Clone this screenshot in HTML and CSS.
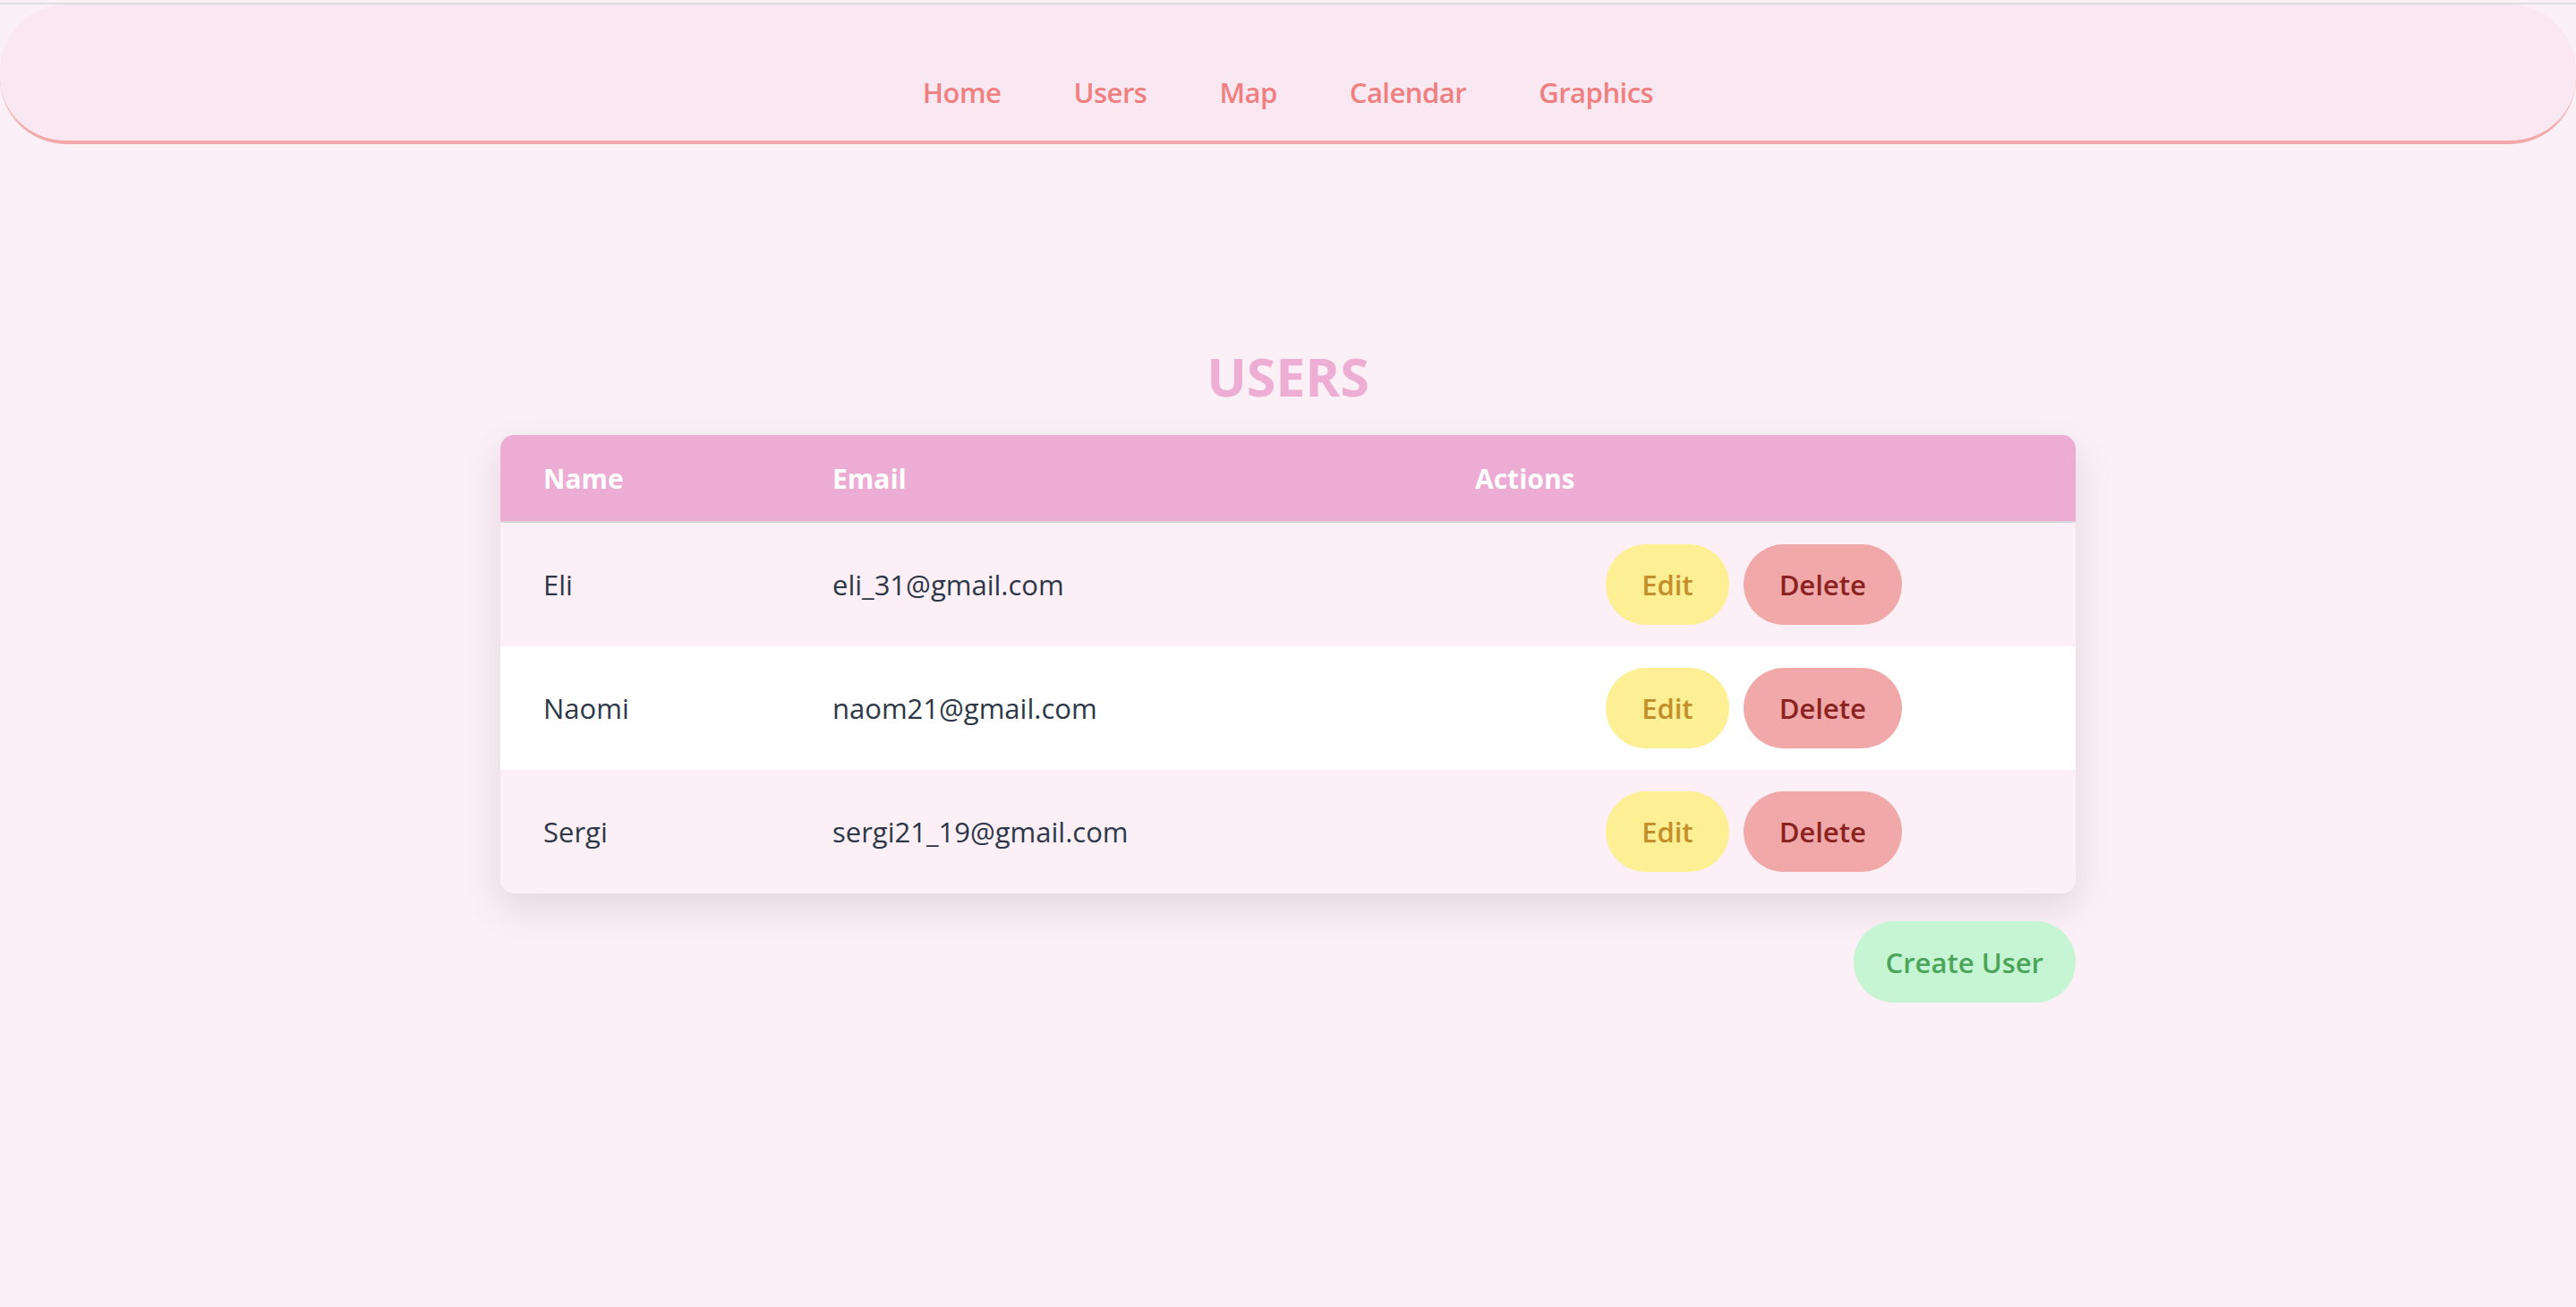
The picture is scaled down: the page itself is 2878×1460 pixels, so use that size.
FILE: index.html
```html
<!DOCTYPE html>
<html lang="en">
<head>
<meta charset="utf-8">
<title>Users</title>
<link rel="stylesheet" href="styles.css">
</head>
<body>
<div class="topline"></div>
<nav class="navbar">
  <ul class="nav-list">
    <li><a class="nav-link" href="#">Home</a></li>
    <li><a class="nav-link" href="#">Users</a></li>
    <li><a class="nav-link" href="#">Map</a></li>
    <li><a class="nav-link" href="#">Calendar</a></li>
    <li><a class="nav-link" href="#">Graphics</a></li>
  </ul>
</nav>
<main class="content">
  <h1 class="title">USERS</h1>
  <div class="table-wrap">
    <table class="users">
      <colgroup>
        <col class="col-name">
        <col class="col-email">
        <col class="col-actions">
      </colgroup>
      <thead>
        <tr><th>Name</th><th>Email</th><th>Actions</th></tr>
      </thead>
      <tbody>
        <tr>
          <td>Eli</td><td>eli_31@gmail.com</td>
          <td><div class="btn-group"><button class="btn btn-edit">Edit</button><button class="btn btn-delete">Delete</button></div></td>
        </tr>
        <tr>
          <td>Naomi</td><td>naom21@gmail.com</td>
          <td><div class="btn-group"><button class="btn btn-edit">Edit</button><button class="btn btn-delete">Delete</button></div></td>
        </tr>
        <tr>
          <td>Sergi</td><td>sergi21_19@gmail.com</td>
          <td><div class="btn-group"><button class="btn btn-edit">Edit</button><button class="btn btn-delete">Delete</button></div></td>
        </tr>
      </tbody>
    </table>
  </div>
  <div class="actions-bar">
    <button class="btn btn-create">Create User</button>
  </div>
</main>
</body>
</html>
```
FILE: styles.css
```css
html, body {
  margin: 0;
  padding: 0;
}
body {
  background: #faf0f5;
  font-family: "Open Sans", "Noto Sans", sans-serif;
  padding-top: 3px;
  min-height: 1457px;
}
.topline {
  height: 2px;
  background: #dedede;
}
.navbar {
  box-sizing: border-box;
  height: 156px;
  background: #f9e7f1;
  border-bottom: 4px solid #f2a8a8;
  border-radius: 74px;
  padding-top: 77px;
}
.nav-list {
  list-style: none;
  margin: 0;
  padding: 0;
  display: flex;
  justify-content: center;
  gap: 81px;
}
.nav-link {
  color: #f08080;
  font-size: 31px;
  font-weight: 600;
  letter-spacing: -0.5px;
  text-decoration: none;
}
.content {
  display: flex;
  flex-direction: column;
  align-items: center;
  padding-top: 218px;
}
.title {
  margin: 0 0 25px;
  font-size: 59px;
  font-weight: 700;
  color: #eeaed3;
  line-height: 82px;
}
.table-wrap {
  width: 1760px;
  border-radius: 15px;
  overflow: hidden;
  box-shadow: 0 16px 40px rgba(120, 80, 100, 0.16);
}
.users {
  width: 100%;
  border-collapse: collapse;
  table-layout: fixed;
}
.col-name { width: 323px; }
.col-email { width: 718px; }
.users th {
  background: #ecacd3;
  color: #ffffff;
  font-size: 30px;
  font-weight: 700;
  text-align: left;
  height: 96px;
  padding: 0 48px;
  border-bottom: 2px solid #d8d4dc;
}
.users td {
  height: 138px;
  padding: 0 48px;
  font-size: 31px;
  color: #2d3748;
}
.users tbody tr:nth-child(odd) td {
  background: #fcf0f6;
}
.users tbody tr:nth-child(even) td {
  background: #ffffff;
}
.btn-group {
  display: flex;
  justify-content: center;
  gap: 16px;
}
.btn {
  font-family: "Open Sans", "Noto Sans", sans-serif;
  height: 90px;
  padding: 0 40px;
  border: none;
  border-radius: 45px;
  font-size: 31px;
  font-weight: 600;
  cursor: pointer;
}
.btn-edit {
  background: #fcef94;
  color: #c48e2c;
}
.btn-delete {
  background: #f0a8a8;
  color: #8b2222;
}
.actions-bar {
  width: 1760px;
  display: flex;
  justify-content: flex-end;
  margin-top: 31px;
}
.btn-create {
  height: 91px;
  padding: 0 36px;
  background: #c6f5d4;
  color: #4aa55a;
}
```
